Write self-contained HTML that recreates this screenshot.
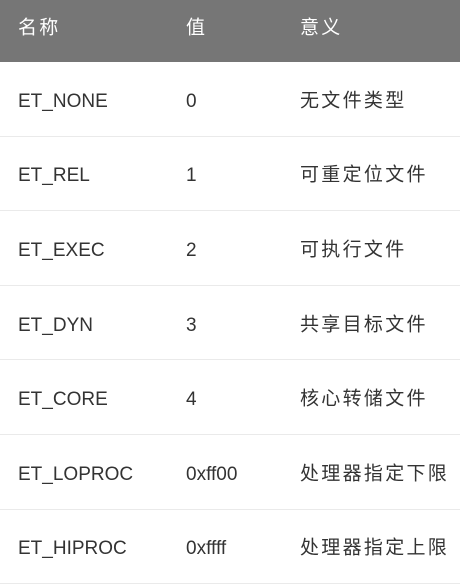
<!DOCTYPE html>
<html><head><meta charset="utf-8"><style>
body{margin:0;width:460px;height:577px;overflow:hidden;background:#fff;font-family:"Liberation Sans","Noto Sans CJK SC",sans-serif;font-size:19px;color:#333}
.h{height:62px;background:#767676;color:#fff;position:relative}
.r{height:74.6px;box-sizing:border-box;border-bottom:1px solid #eaeaea;position:relative}
.c{position:absolute;top:50%;transform:translateY(-50%);white-space:nowrap}
.r .a,.r .b{top:calc(50% + 3px)}
.a{left:18px}.b{left:186px}.d{left:300px;letter-spacing:2.3px}
.h .a{letter-spacing:2.3px}
.h .c{top:26px}
</style></head><body>
<div class="h"><span class="c a">名称</span><span class="c b">值</span><span class="c d">意义</span></div>
<div class="r"><span class="c a">ET_NONE</span><span class="c b">0</span><span class="c d">无文件类型</span></div>
<div class="r"><span class="c a">ET_REL</span><span class="c b">1</span><span class="c d">可重定位文件</span></div>
<div class="r"><span class="c a">ET_EXEC</span><span class="c b">2</span><span class="c d">可执行文件</span></div>
<div class="r"><span class="c a">ET_DYN</span><span class="c b">3</span><span class="c d">共享目标文件</span></div>
<div class="r"><span class="c a">ET_CORE</span><span class="c b">4</span><span class="c d">核心转储文件</span></div>
<div class="r"><span class="c a">ET_LOPROC</span><span class="c b">0xff00</span><span class="c d">处理器指定下限</span></div>
<div class="r"><span class="c a">ET_HIPROC</span><span class="c b">0xffff</span><span class="c d">处理器指定上限</span></div>
</body></html>
